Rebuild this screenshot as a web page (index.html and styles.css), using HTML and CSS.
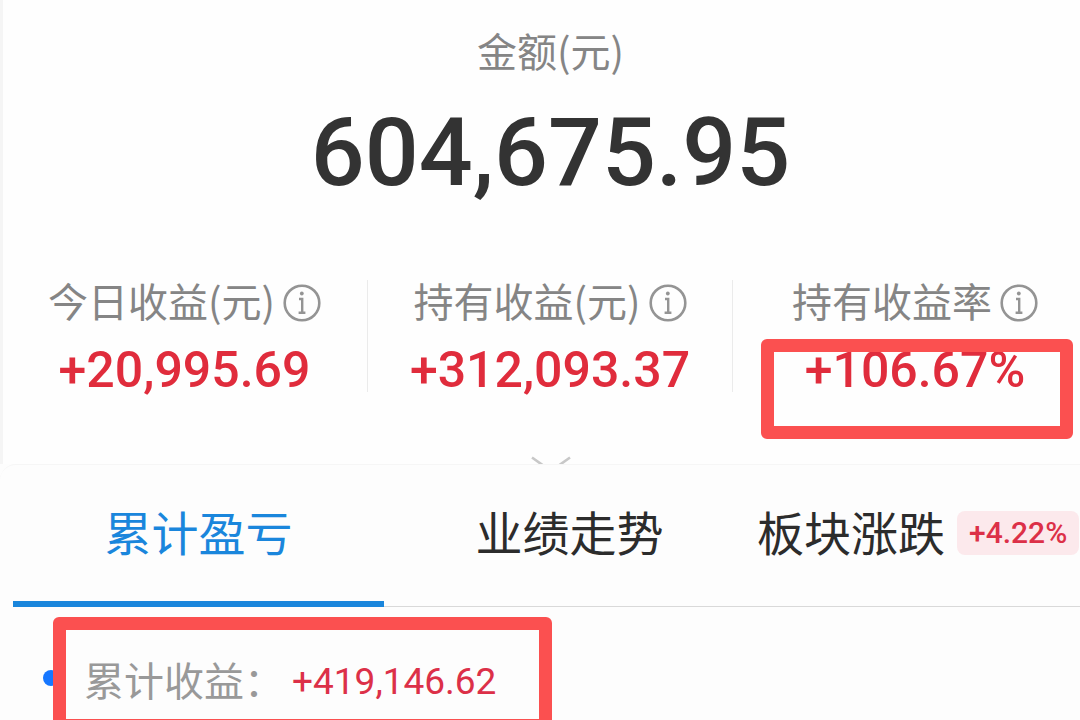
FILE: index.html
```html
<!DOCTYPE html>
<html lang="zh-CN">
  <head>
    <meta charset="UTF-8" />
    <meta name="viewport" content="width=device-width, initial-scale=1.0" />
    <title>累计盈亏</title>
    <link rel="stylesheet" href="styles.css">
  </head>
  <body>
    <!-- shared info icon -->
    <svg class="sprite" width="0" height="0" aria-hidden="true">
      <symbol id="info" viewBox="0 0 38 38">
        <circle cx="19" cy="19" r="17.3" fill="none" stroke="currentColor" stroke-width="2.6" />
        <circle cx="18.8" cy="9.5" r="1.9" fill="currentColor" />
        <path d="M16 15H19.2V28.5M15.6 28.7H22.4" fill="none" stroke="currentColor" stroke-width="2.4" />
      </symbol>
    </svg>

    <main class="page">
      <section class="summary">
        <h1 class="summary-title">金额(元)</h1>
        <p class="summary-amount">604,675.95</p>

        <div class="stats">
          <div class="stat">
            <div class="stat-label">
              <span>今日收益(元)</span>
              <button type="button" class="info-btn" aria-label="今日收益">
                <svg class="info-icon"><use href="#info" /></svg>
              </button>
            </div>
            <div class="stat-value">+20,995.69</div>
          </div>
          <div class="stat">
            <div class="stat-label">
              <span>持有收益(元)</span>
              <button type="button" class="info-btn" aria-label="持有收益">
                <svg class="info-icon"><use href="#info" /></svg>
              </button>
            </div>
            <div class="stat-value">+312,093.37</div>
          </div>
          <div class="stat">
            <div class="stat-label">
              <span>持有收益率</span>
              <button type="button" class="info-btn" aria-label="持有收益率">
                <svg class="info-icon"><use href="#info" /></svg>
              </button>
            </div>
            <div class="stat-value">+106.67%</div>
            <div class="highlight"></div>
          </div>
        </div>

        <button type="button" class="expand" aria-label="展开">
          <svg class="chevron" viewBox="0 0 40 8">
            <path d="M1 1.5L20 15L39 1.5" fill="none" stroke="#c8c8c8" stroke-width="2.6" />
          </svg>
        </button>
      </section>

      <section class="detail">
        <nav class="tabs">
          <a href="#profit" class="tab active">累计盈亏</a>
          <a href="#trend" class="tab">业绩走势</a>
          <a href="#sector" class="tab tab-badge">板块涨跌<span class="badge">+4.22%</span></a>
        </nav>

        <div class="legend">
          <span class="dot"></span>
          <div class="legend-box">
            <span class="legend-label">累计收益：</span>
            <span class="legend-value">+419,146.62</span>
          </div>
        </div>
      </section>
    </main>
  </body>
</html>
```

FILE: styles.css
```css
* {
  box-sizing: border-box;
}
body {
  margin: 0;
  height: 100vh;
  overflow: hidden;
  background-color: #fdfdfd;
  font-family: "Noto Sans CJK SC", sans-serif;
}
h1,
p {
  margin: 0;
  font-weight: normal;
}
button {
  padding: 0;
  border: none;
  background: none;
  cursor: pointer;
}
a {
  color: inherit;
  text-decoration: none;
}
.sprite {
  position: absolute;
}

/* the card runs a little past the right edge */
.summary {
  margin-right: -18px;
  padding-top: 22px;
  border-left: 3px solid #f5f5f5;
  background-color: #fefefe;
  text-align: center;
}
.summary-title {
  font-size: 40px;
  line-height: 56px;
  color: #858585;
}
.summary-amount {
  font-family: Roboto, sans-serif;
  font-size: 95px;
  font-weight: 500;
  line-height: 150px;
  color: #333;
}

.stats {
  display: grid;
  grid-template-columns: repeat(3, 1fr);
  margin: 52px 1px 0 -1px;
}
.stat {
  position: relative;
}
.stat + .stat {
  border-left: 1px solid #ebebeb;
}
.stat-label {
  display: flex;
  align-items: flex-start;
  justify-content: center;
  gap: 8px;
  height: 44px;
  font-size: 40px;
  line-height: 40px;
  color: #858585;
}
.info-btn {
  display: flex;
  padding-top: 4px;
  color: #949494;
}
.info-icon {
  width: 38px;
  height: 38px;
}
.stat-value {
  margin-top: 24px;
  font-family: Roboto, sans-serif;
  font-size: 50px;
  font-weight: 500;
  line-height: 44px;
  color: #e02c3c;
}
.highlight {
  position: absolute;
  top: 59px;
  left: 28px;
  right: 24px;
  height: 100px;
  border: 13px solid #fb5050;
  border-radius: 6px;
}

.expand {
  display: block;
  margin: 0 auto;
  padding-top: 64px;
}
.chevron {
  display: block;
  width: 40px;
  height: 8px;
}

.detail {
  border-top: 1px solid #f6f6f6;
  border-radius: 16px 0 0 0;
}
.tabs {
  display: grid;
  grid-template-columns: repeat(3, 1fr);
  margin: 0 -46px 0 13px;
  border-bottom: 1px solid #d9d9d9;
}
.tab {
  height: 142px;
  margin-bottom: -1px;
  border-bottom: 6px solid transparent;
  font-size: 47px;
  line-height: 132px;
  text-align: center;
  color: #2c2c2c;
}
.tab.active {
  border-color: #1a86dc;
  color: #1a86dc;
}
.tab-badge {
  display: flex;
  align-items: flex-start;
  gap: 12px;
  padding-left: 2px;
}
.badge {
  margin-top: 46px;
  padding: 0 12px;
  border-radius: 8px;
  background-color: #fce9ec;
  font-family: Roboto, sans-serif;
  font-size: 30px;
  font-weight: 500;
  line-height: 44px;
  color: #dc3048;
}

.legend {
  display: flex;
  align-items: center;
  padding: 10px 0 0 43px;
}
.dot {
  width: 16px;
  height: 16px;
  margin: 6px -6px 0 0;
  border-radius: 50%;
  background-color: #1677ff;
}
.legend-box {
  position: relative;
  display: flex;
  gap: 8px;
  width: 499px;
  padding: 14px 18px 0;
  border: 13px solid #fb5050;
  border-radius: 6px;
  background-color: #fdfdfd;
  line-height: 75px;
}
.legend-label {
  font-size: 40px;
  line-height: 71px;
  color: #999;
}
.legend-value {
  font-family: Roboto, sans-serif;
  font-size: 37px;
  color: #dc3048;
}
```
